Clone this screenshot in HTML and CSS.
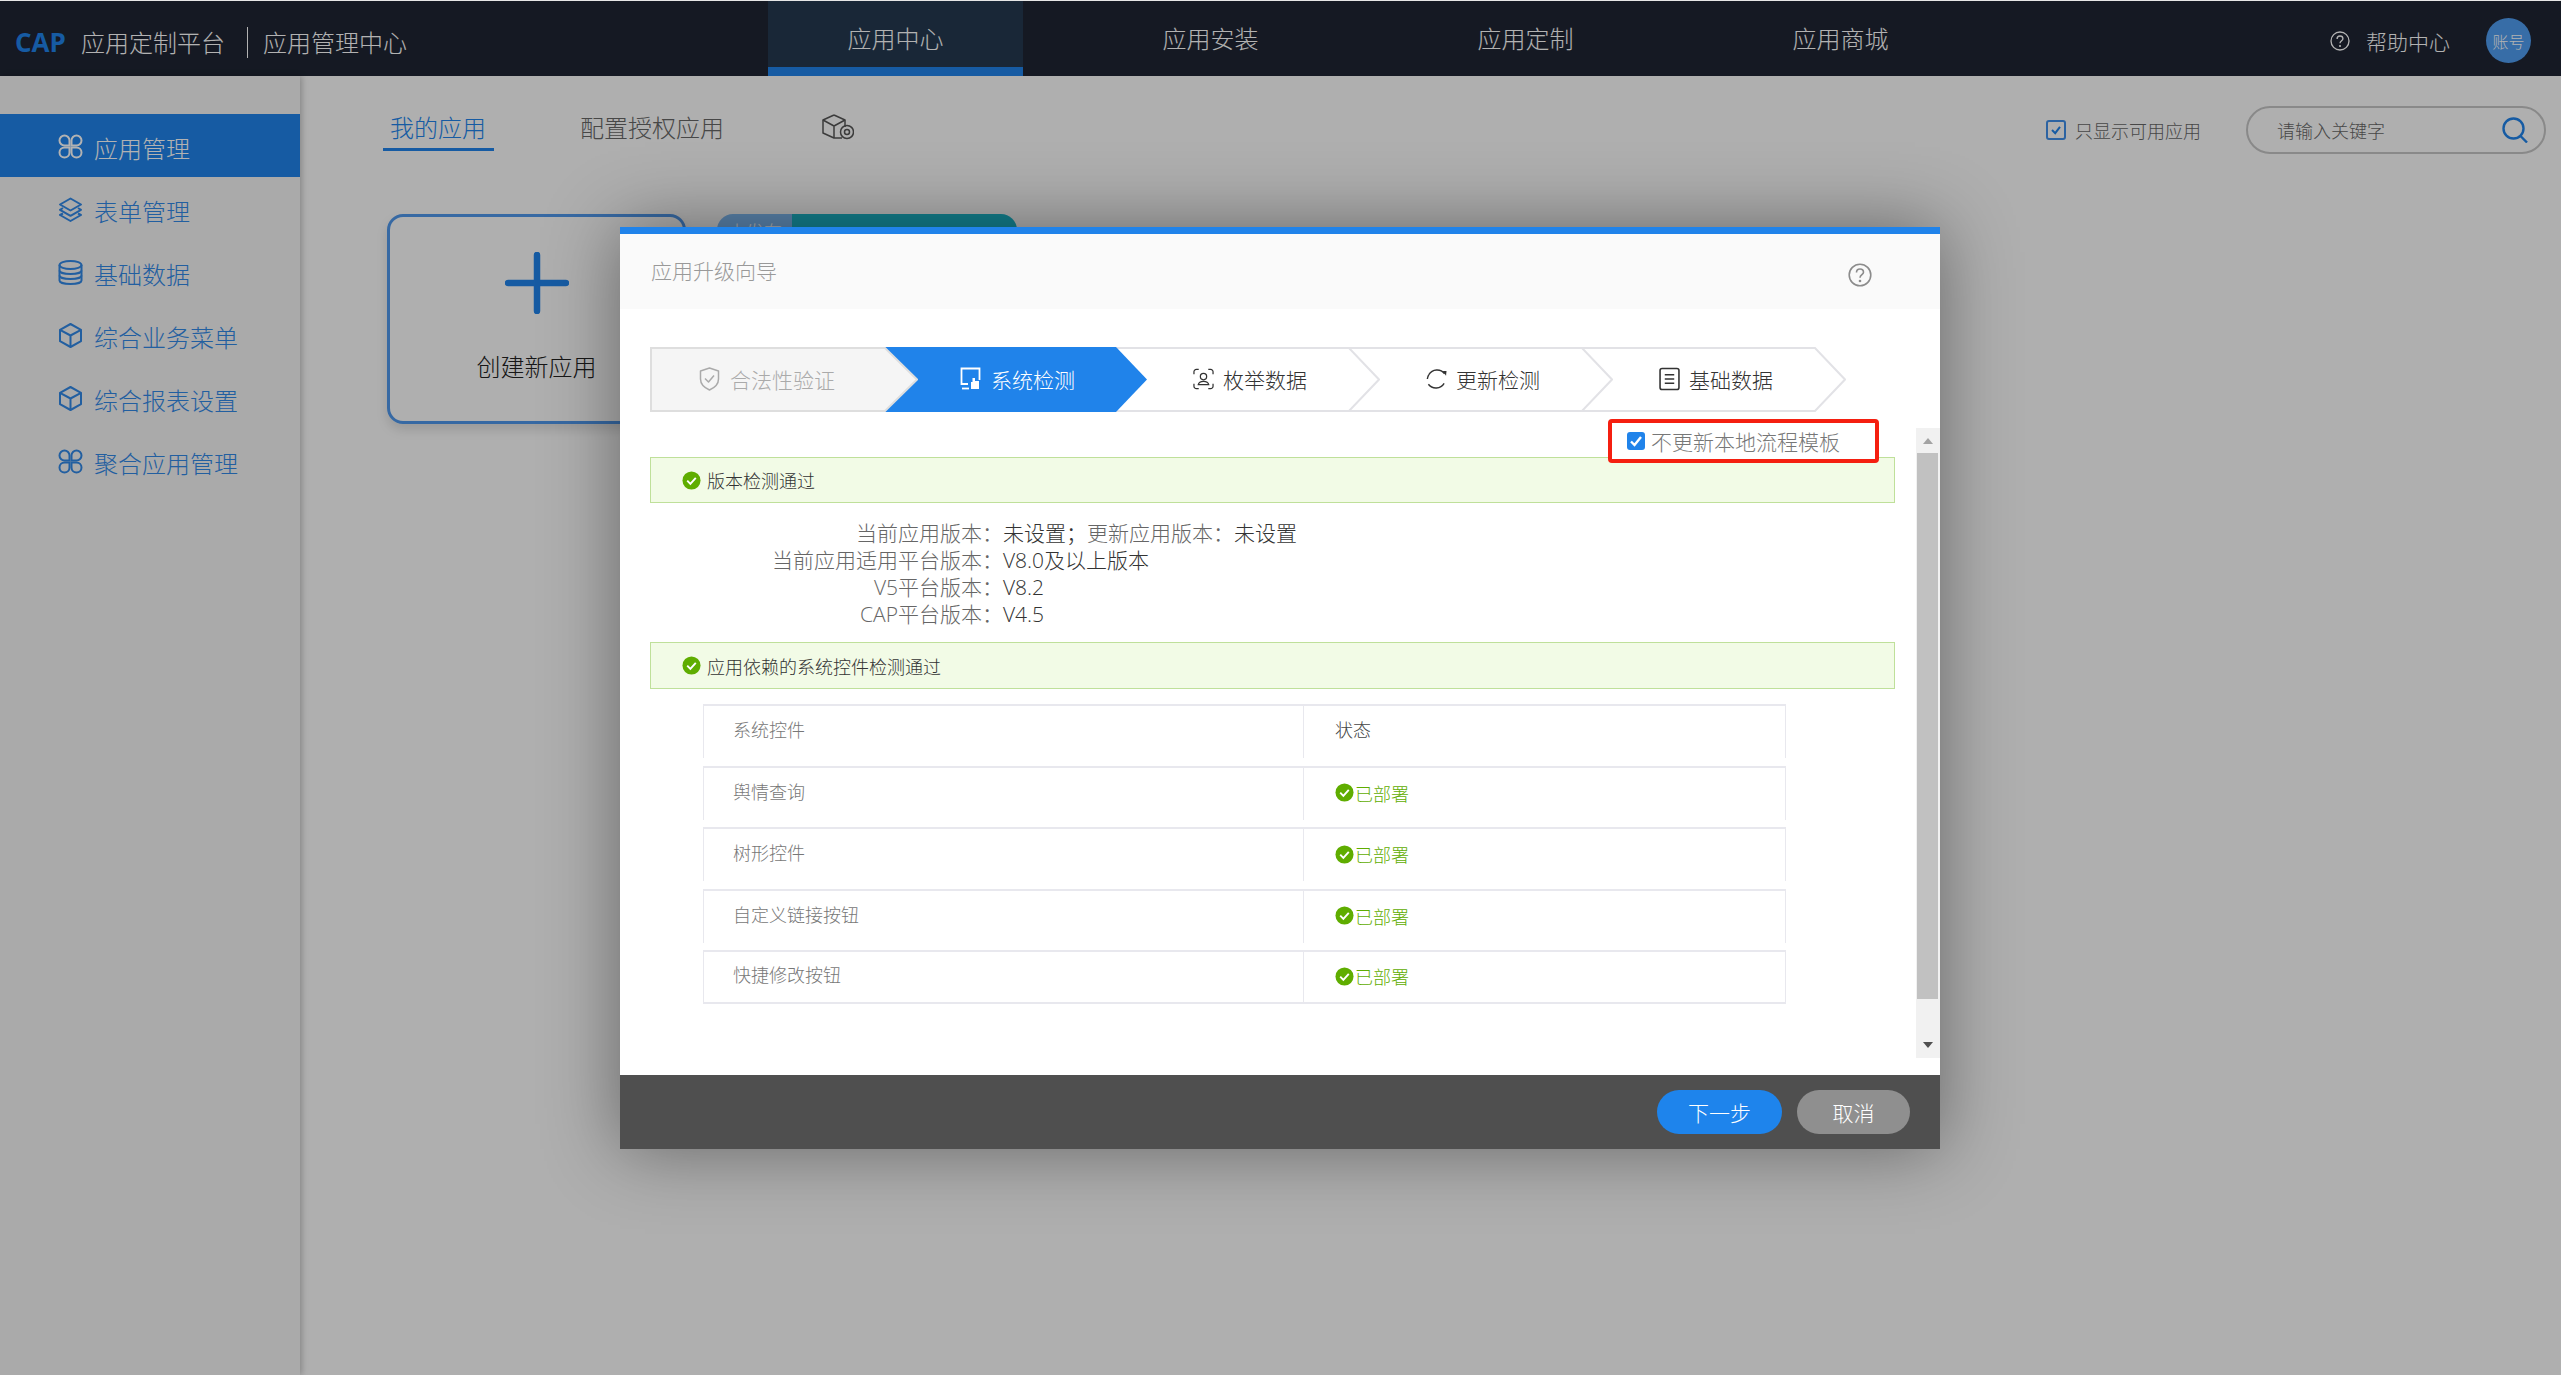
FILE: index.html
```html
<!DOCTYPE html>
<html lang="zh-CN">
<head>
<meta charset="utf-8">
<title>应用管理中心</title>
<link rel="stylesheet" href="styles.css">
</head>
<body>
<svg class="defs" width="0" height="0" aria-hidden="true">
  <symbol id="i-apps" viewBox="0 0 25 25"><g fill="none" stroke="currentColor" stroke-width="2"><path d="M11.500 11.500H6.500A5 5 0 1 1 11.500 6.500Z"/><path d="M13.500 11.500V6.500A5 5 0 1 1 18.500 11.500Z"/><path d="M11.500 13.500V18.500A5 5 0 1 1 6.500 13.500Z"/><path d="M13.500 13.500H18.500A5 5 0 1 1 13.500 18.500Z"/></g></symbol>
  <symbol id="i-layers" viewBox="0 0 25 25"><g fill="none" stroke="currentColor" stroke-width="2" stroke-linejoin="round"><path d="M12.500 1.500L23 7.500 12.500 13.500 2 7.500Z"/><path d="M5 11L2 12.800 12.500 18.800 23 12.800 20 11"/><path d="M5 16.500L2 18 12.500 24 23 18 20 16.500"/></g></symbol>
  <symbol id="i-db" viewBox="0 0 25 25"><g fill="none" stroke="currentColor" stroke-width="2"><ellipse cx="12.500" cy="5" rx="11" ry="4"/><path d="M1.500 5V20.500C1.500 22.700 6.500 24 12.500 24S23.500 22.700 23.500 20.500V5"/><path d="M1.500 10.500C1.500 12.700 6.500 14 12.500 14S23.500 12.700 23.500 10.500"/><path d="M1.500 15.500C1.500 17.700 6.500 19 12.500 19S23.500 17.700 23.500 15.500"/></g></symbol>
  <symbol id="i-cube" viewBox="0 0 25 25"><g fill="none" stroke="currentColor" stroke-width="2" stroke-linejoin="round"><path d="M12.500 1L23 6.800V18.200L12.500 24 2 18.200V6.800Z"/><path d="M2 6.800L12.500 12.500 23 6.800M12.500 12.500V24"/></g></symbol>
  <symbol id="i-check" viewBox="0 0 20 20"><circle cx="10" cy="10" r="9.500" fill="#5fad00"/><path d="M5.500 10.200L8.800 13.500 14.500 7.200" fill="none" stroke="#fff" stroke-width="2"/></symbol>
  <symbol id="i-help" viewBox="0 0 24 24"><g fill="none" stroke="currentColor" stroke-width="1.600"><circle cx="12" cy="12" r="10.800"/><path d="M8.500 9.500C8.500 7.300 10 6 12 6S15.500 7.300 15.500 9.300C15.500 11.500 12 12 12 14.800"/></g><circle cx="12" cy="18" r="1.300" fill="currentColor"/></symbol>
</svg>

<div class="app">
  <header class="topbar">
    <div class="brand">
      <span class="cap">CAP</span>
      <span class="brand-name">应用定制平台</span>
      <span class="brand-sep"></span>
      <span class="brand-name">应用管理中心</span>
    </div>
    <nav class="nav">
      <a class="nav-item is-active">应用中心</a>
      <a class="nav-item">应用安装</a>
      <a class="nav-item">应用定制</a>
      <a class="nav-item">应用商城</a>
    </nav>
    <div class="top-right">
      <svg class="top-help"><use href="#i-help"/></svg>
      <span class="top-help-text">帮助中心</span>
      <span class="avatar">账号</span>
    </div>
  </header>

  <div class="layout">
    <aside class="sidebar">
      <a class="side-item is-active"><svg class="side-icon"><use href="#i-apps"/></svg>应用管理</a>
      <a class="side-item"><svg class="side-icon"><use href="#i-layers"/></svg>表单管理</a>
      <a class="side-item"><svg class="side-icon"><use href="#i-db"/></svg>基础数据</a>
      <a class="side-item"><svg class="side-icon"><use href="#i-cube"/></svg>综合业务菜单</a>
      <a class="side-item"><svg class="side-icon"><use href="#i-cube"/></svg>综合报表设置</a>
      <a class="side-item"><svg class="side-icon"><use href="#i-apps"/></svg>聚合应用管理</a>
    </aside>

    <main class="content">
      <div class="toolbar">
        <div class="tabs">
          <a class="tab is-active">我的应用</a>
          <a class="tab">配置授权应用</a>
          <svg class="tab-icon" viewBox="0 0 32 26"><g fill="none" stroke="#555" stroke-width="1.500" stroke-linejoin="round"><path d="M12 1L23 6V13M20 24H12L1 19V6L12 1"/><path d="M1 6L12 12 23 6M12 12V24"/><circle cx="25" cy="18" r="6.500"/><circle cx="25" cy="18" r="2.500"/></g></svg>
        </div>
        <div class="filters">
          <label class="only">
            <span class="only-box"><svg viewBox="0 0 20 20"><path d="M5 10L9 14 15 6" fill="none" stroke="#2083ea" stroke-width="2.500"/></svg></span>
            只显示可用应用
          </label>
          <div class="search">
            <span class="search-ph">请输入关键字</span>
            <svg class="search-icon" viewBox="0 0 26 26"><circle cx="11.500" cy="11.500" r="10" fill="none" stroke="#2083ea" stroke-width="2.400"/><path d="M18.500 19L25 25.500" stroke="#2083ea" stroke-width="2.400"/></svg>
          </div>
        </div>
      </div>
      <div class="cards">
        <div class="card card-new">
          <svg class="plus" viewBox="0 0 64 62"><path d="M32 3V59M3 31H61" stroke="#2083ea" stroke-width="6.500" stroke-linecap="round"/></svg>
          <span class="card-new-text">创建新应用</span>
        </div>
        <div class="card-app">
          <div class="card-app-head"><span class="card-tag">未发布</span><span class="card-app-title"></span></div>
        </div>
      </div>
    </main>
  </div>

  <div class="overlay"></div>

  <section class="dialog">
    <div class="dlg-head">
      <span class="dlg-title">应用升级向导</span>
      <svg class="dlg-help"><use href="#i-help"/></svg>
    </div>
    <div class="dlg-body">
      <div class="steps">
        <div class="step step-done">
          <svg class="step-shape step-shape-first" viewBox="0 0 268 65"><path d="M1 1H235L267 32.500 235 64H1Z"/></svg>
          <svg class="step-icon" viewBox="0 0 21 24"><g fill="none" stroke="currentColor" stroke-width="1.500" stroke-linejoin="round"><path d="M10.500 1L19.500 4V12C19.500 17 15 21 10.500 23 6 21 1.500 17 1.500 12V4Z"/><path d="M6 11.500L9.500 15 15 8.500"/></g></svg>
          <span>合法性验证</span>
        </div>
        <div class="step step-active">
          <svg class="step-shape" viewBox="0 0 264 65"><path d="M0 0H233L264 32.500 233 65H0Z"/></svg>
          <svg class="step-icon" viewBox="0 0 21 24"><g fill="none" stroke="currentColor" stroke-width="1.800"><path d="M8 17H1.500V1.500H19.500V13"/><path d="M2 21.500H9"/></g><path d="M12.500 11V15H11V22H19V14H15V11Z" fill="currentColor"/></svg>
          <span>系统检测</span>
        </div>
        <div class="step">
          <svg class="step-shape" viewBox="0 0 264 65"><path d="M0 1H233L263 32.500 233 64H0"/></svg>
          <svg class="step-icon" viewBox="0 0 22 22"><g fill="none" stroke="currentColor" stroke-width="1.300"><path d="M1 6V3.500A2.500 2.500 0 0 1 3.500 1H6M16 1H18.500A2.500 2.500 0 0 1 21 3.500V6M21 16V18.500A2.500 2.500 0 0 1 18.500 21H16M6 21H3.500A2.500 2.500 0 0 1 1 18.500V16"/><circle cx="11" cy="8.500" r="3.300"/><path d="M5.500 17C6 14.500 8 13.500 11 13.500S16 14.500 16.500 17Z"/></g></svg>
          <span>枚举数据</span>
        </div>
        <div class="step">
          <svg class="step-shape" viewBox="0 0 264 65"><path d="M0 1H233L263 32.500 233 64H0"/></svg>
          <svg class="step-icon" viewBox="0 0 22 24"><g fill="none" stroke="currentColor" stroke-width="1.500"><path d="M3 7.500A10 10 0 0 1 19.500 6.500"/><path d="M19 16.500A10 10 0 0 1 2.500 17.500"/><path d="M1.400 12A10 10 0 0 1 3 7.500"/></g><path d="M17.500 3.500L21.500 3.500 21 8.500Z" fill="currentColor"/></svg>
          <span>更新检测</span>
        </div>
        <div class="step">
          <svg class="step-shape" viewBox="0 0 264 65"><path d="M0 1H233L263 32.500 233 64H0"/></svg>
          <svg class="step-icon" viewBox="0 0 20 22"><g fill="none" stroke="currentColor" stroke-width="1.500"><rect x="1" y="1" width="18" height="20" rx="2"/><path d="M5.500 7H14.500M5.500 11H14.500M5.500 15H14.500"/></g></svg>
          <span>基础数据</span>
        </div>
      </div>

      <div class="scroll-area">
        <div class="scroll-main">
          <div class="notice"><svg class="check"><use href="#i-check"/></svg>版本检测通过</div>
          <dl class="info">
            <dt>当前应用版本：</dt><dd>未设置；<span class="info-gap">更新应用版本：</span>未设置</dd>
            <dt>当前应用适用平台版本：</dt><dd>V8.0及以上版本</dd>
            <dt>V5平台版本：</dt><dd>V8.2</dd>
            <dt>CAP平台版本：</dt><dd>V4.5</dd>
          </dl>
          <div class="notice notice-two"><svg class="check"><use href="#i-check"/></svg>应用依赖的系统控件检测通过</div>
          <div class="tbl">
            <div class="tr"><div class="td td-name">系统控件</div><div class="td td-head">状态</div></div>
            <div class="tr"><div class="td td-name">舆情查询</div><div class="td td-ok"><svg class="check"><use href="#i-check"/></svg>已部署</div></div>
            <div class="tr"><div class="td td-name">树形控件</div><div class="td td-ok"><svg class="check"><use href="#i-check"/></svg>已部署</div></div>
            <div class="tr"><div class="td td-name">自定义链接按钮</div><div class="td td-ok"><svg class="check"><use href="#i-check"/></svg>已部署</div></div>
            <div class="tr tr-last"><div class="td td-name">快捷修改按钮</div><div class="td td-ok"><svg class="check"><use href="#i-check"/></svg>已部署</div></div>
          </div>
        </div>
        <div class="scrollbar">
          <div class="sb-up"><span class="tri-up"></span></div>
          <div class="sb-thumb"></div>
          <div class="sb-down"><span class="tri-down"></span></div>
        </div>
        <label class="keep">
          <span class="keep-box"><svg viewBox="0 0 18 18"><path d="M4 9.500L7.500 13 14 5" fill="none" stroke="#fff" stroke-width="2.400"/></svg></span>
          不更新本地流程模板
        </label>
      </div>
    </div>
    <div class="dlg-foot">
      <button class="btn btn-next">下一步</button>
      <button class="btn btn-cancel">取消</button>
    </div>
  </section>
</div>
</body>
</html>
```

FILE: styles.css
```css
* { box-sizing: border-box; }
html, body { margin: 0; height: 100%; }
body {
  background: #e6e6e6;
  padding-top: 1px;
  overflow: hidden;
  font-family: "Noto Sans CJK SC", "Noto Sans", sans-serif;
  font-size: 21px;
  font-weight: 300;
  color: #333;
}
.defs { position: absolute; }
.app { position: relative; height: 1374px; background: #fbfbfb; overflow: hidden; }

/* top bar */
.topbar { display: flex; height: 75px; background: #1f2533; color: #fff; }
.brand { display: flex; align-items: center; width: 768px; padding: 7px 0 0 15px; }
.cap { width: 66px; font-family: "Open Sans", sans-serif; font-size: 26px; font-weight: 700; color: #2083ea; line-height: 30px; }
.brand-name { font-size: 24px; line-height: 34px; color: #fff; }
.brand-sep { width: 1px; height: 31px; margin: 0 15px 0 22px; background: #fff; }
.nav { display: flex; gap: 60px; }
.nav-item {
  width: 255px; height: 75px; padding-top: 11px; border-bottom: 9px solid transparent;
  text-align: center; font-size: 24px; line-height: 52px; color: #fff;
}
.nav-item.is-active { background: #25394f; border-bottom-color: #2083ea; }
.top-right { display: flex; align-items: center; margin-left: auto; padding: 0 30px 0 0; }
.top-help { width: 20px; height: 20px; margin-top: 5px; color: #fff; }
.top-help-text { margin: 5px 36px 0 16px; line-height: 30px; color: #fff; }
.avatar {
  display: flex; align-items: center; justify-content: center;
  width: 45px; height: 45px; margin-top: 4px; border-radius: 50%; background: #4f9cf0;
  font-size: 16px; color: #fff;
}

/* layout */
.layout { display: flex; height: 1299px; }
.sidebar { flex: none; width: 300px; padding-top: 38px; background: #f4f4f4; box-shadow: 2px 0 6px rgba(0,0,0,.22); }
.side-item { display: flex; align-items: center; height: 63px; padding: 4px 0 0 58px; font-size: 24px; line-height: 34px; color: #3288e6; }
.side-item.is-active { background: #2083ea; color: #fff; }
.side-icon { flex: none; width: 25px; height: 25px; margin: -3px 11px 0 0; }

.content { flex: 1; min-width: 0; padding-top: 30px; }
.toolbar { display: flex; justify-content: space-between; height: 48px; padding: 0 15px 0 83px; }
.tabs { display: flex; }
.tab { height: 45px; padding: 0 7px; font-size: 24px; line-height: 42px; color: #666; margin-right: 79px; }
.tab.is-active { width: 111px; border-bottom: 3px solid #2083ea; color: #2083ea; }
.tab-icon { width: 32px; height: 26px; margin: 8px 0 0 12px; }
.filters { display: flex; align-items: center; gap: 45px; }
.only { display: flex; align-items: center; gap: 9px; font-size: 18px; color: #666; line-height: 30px; }
.only-box { display: block; width: 20px; height: 20px; border: 2px solid #3f8fe8; border-radius: 3px; }
.only-box svg { display: block; width: 16px; height: 16px; }
.search {
  display: flex; align-items: center; justify-content: space-between;
  width: 300px; height: 48px; padding: 0 16px 0 29px;
  border: 2px solid #c4c4c4; border-radius: 24px;
}
.search-ph { font-size: 18px; color: #666; }
.search-icon { width: 26px; height: 26px; }

.cards { display: flex; gap: 31px; margin-top: 60px; padding-left: 87px; }
.card { border-radius: 16px; }
.card-new {
  display: flex; flex-direction: column; align-items: center;
  width: 299px; height: 210px; padding-top: 35px;
  border: 3px solid #4f97ea; box-shadow: 0 6px 12px rgba(0,0,0,.12);
}
.plus { width: 64px; height: 62px; }
.card-new-text { margin-top: 34px; font-size: 24px; line-height: 36px; color: #222; }
.card-app { width: 300px; height: 210px; border-radius: 16px; overflow: hidden; }
.card-app-head { display: flex; height: 40px; }
.card-tag { width: 75px; padding-left: 11px; background: #82bcf5; color: #fff; font-size: 18px; line-height: 34px; }
.card-app-title { flex: 1; background: #1cb7cb; }

/* dialog */
.overlay { position: absolute; inset: 0; background: rgba(0,0,0,.3); }
.dialog {
  position: absolute; left: 620px; top: 226px; display: flex; flex-direction: column;
  width: 1320px; height: 922px; background: #fff;
  border-top: 7px solid #2083ea;
  box-shadow: 0 0 70px rgba(0,0,0,.42);
}
.dlg-head {
  display: flex; align-items: center; justify-content: space-between; flex: none;
  height: 75px; padding: 0 68px 0 31px; background: #fafafa;
}
.dlg-title { margin-top: -3px; color: #999; line-height: 30px; }
.dlg-help { width: 24px; height: 24px; margin-top: 6px; color: #8c8c8c; }
.dlg-body { flex: 1; min-height: 0; display: flex; flex-direction: column; }

.steps { display: flex; flex: none; height: 65px; margin: 38px 0 0 30px; }
.step { position: relative; display: flex; align-items: center; gap: 9px; width: 233px; padding: 0 0 2px 77px; font-size: 21px; color: #333; }
.step:nth-child(1) { z-index: 5; gap: 10px; padding-left: 49px; color: #aaa; }
.step:nth-child(2) { z-index: 4; gap: 10px; color: #fff; }
.step:nth-child(3) { z-index: 3; }
.step:nth-child(4) { z-index: 2; }
.step:nth-child(5) { z-index: 1; }
.step > span, .step-icon { position: relative; }
.step-icon { width: 21px; height: 24px; flex: none; }
.step-shape { position: absolute; left: 0; top: 0; width: 264px; height: 65px; fill: #fff; stroke: #e2e2e6; stroke-width: 2; }
.step-shape-first { width: 268px; }
.step-done .step-shape { fill: #f5f5f5; stroke: #dedede; }
.step-active .step-shape { fill: #2083ea; stroke: none; }

.scroll-area { position: relative; display: flex; height: 630px; margin-top: 16px; }
.scroll-main { flex: 1; min-width: 0; padding: 29px 21px 0 30px; }
.notice {
  display: flex; align-items: center; gap: 6px; height: 46px; padding-left: 31px;
  background: #f2fbe6; border: 1.500px solid #bfe09a; font-size: 18px; color: #333;
}
.notice-two { height: 47px; }
.check { flex: none; width: 19px; height: 19px; }
.info {
  display: grid; grid-template-columns: 353px 1fr; margin: 17px 0 14px;
  font-family: "Open Sans", "Noto Sans CJK SC", sans-serif;
  font-size: 21px; line-height: 27px;
}
.info dt { text-align: right; color: #666; }
.info dd { margin: 0; color: #333; }
.info-gap { margin-left: 0; color: #666; }

.tbl { width: 1083px; margin: 15px 0 0 53px; }
.tr { display: flex; height: 54px; margin-bottom: 7.500px; border: 2px solid #e8e8ee; border-bottom: 0; border-right-width: 1.500px; border-left-width: 1.500px; }
.tr-last { border-bottom: 2px solid #e8e8ee; }
.td { display: flex; align-items: center; font-size: 18px; }
.td-name { width: 600px; padding: 0 0 6px 29px; color: #777; border-right: 1.500px solid #e8e8ee; }
.td-head { padding: 0 0 6px 31px; color: #444; }
.td-ok { padding: 0 0 2px 31px; color: #5fad00; }
.td-ok .check { margin-right: 1px; }

.scrollbar { flex: none; display: flex; flex-direction: column; width: 24px; background: #f1f1f1; padding-left: 1px; padding-right: 2px; }
.sb-up { display: flex; align-items: center; justify-content: center; height: 25px; }
.sb-thumb { height: 546px; background: #c1c1c1; }
.sb-down { flex: 1; display: flex; align-items: flex-end; justify-content: center; padding-bottom: 10px; }
.tri-up { width: 0; height: 0; border: 5.500px solid transparent; border-top: 0; border-bottom: 6px solid #a3a3a3; }
.tri-down { width: 0; height: 0; border: 5.500px solid transparent; border-bottom: 0; border-top: 6px solid #505050; }

.keep {
  position: absolute; left: 988px; top: -9px; display: flex; align-items: center; gap: 6px;
  width: 271px; height: 44px; padding-left: 15px;
  border: 4.500px solid #f51f10; border-radius: 4px; background: #fff; color: #777; font-size: 21px;
}
.keep-box { width: 18px; height: 18px; border-radius: 3px; background: #2083ea; }
.keep-box svg { display: block; width: 18px; height: 18px; }

.dlg-foot { display: flex; justify-content: flex-end; align-items: center; gap: 15px; flex: none; height: 74px; padding-right: 30px; background: #4f4f4f; }
.btn { height: 44px; padding: 0; border: 0; border-radius: 22px; font-family: inherit; font-weight: inherit; font-size: 21px; color: #fff; }
.btn-next { width: 125px; background: #1e84ec; }
.btn-cancel { width: 113px; background: #8f8f8f; }
```
